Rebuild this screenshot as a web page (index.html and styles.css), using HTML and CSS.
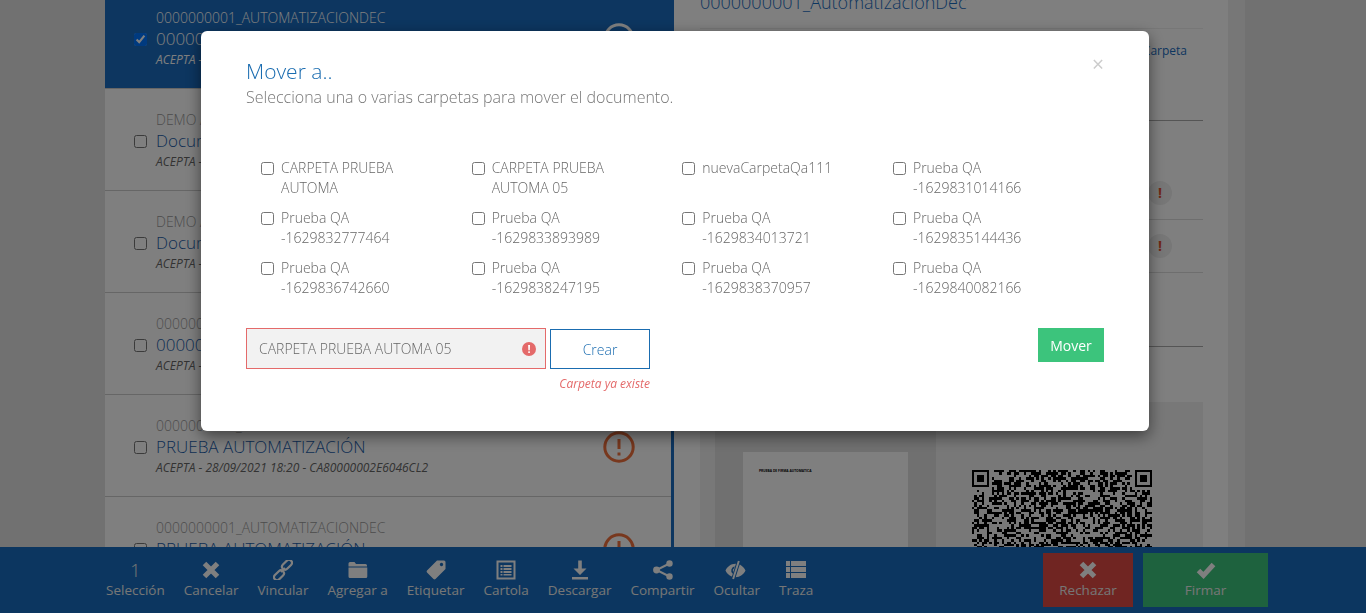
FILE: index.html
```html
<!DOCTYPE html>
<html lang="es">

<head>
  <meta charset="UTF-8">
  <meta name="viewport" content="width=device-width, initial-scale=1.0">
  <title>Mover a..</title>
  <link rel="stylesheet" href="styles.css">
</head>

<body>
  <div class="page">
    <div class="content">
      <section class="doc-list">
        <article class="doc-row selected">
          <input type="checkbox" class="row-check" checked>
          <div class="row-text">
            <p class="row-owner">0000000001_AUTOMATIZACIONDEC</p>
            <p class="row-title">0000000001_AutomatizaciónDec</p>
            <p class="row-meta">ACEPTA - 28/09/2021 18:20 - CA80000002E6046CL2</p>
          </div>
          <svg class="row-alert" viewBox="0 0 32 32"><circle cx="16" cy="16" r="14.2" /><path d="M16 8v10M16 21.5v3" /></svg>
        </article>
        <article class="doc-row">
          <input type="checkbox" class="row-check">
          <div class="row-text">
            <p class="row-owner">DEMO ACEPTA</p>
            <p class="row-title">Documento de prueba</p>
            <p class="row-meta">ACEPTA - 28/09/2021 18:20 - CA80000002E6046CL2</p>
          </div>
          <svg class="row-alert" viewBox="0 0 32 32"><circle cx="16" cy="16" r="14.2" /><path d="M16 8v10M16 21.5v3" /></svg>
        </article>
        <article class="doc-row">
          <input type="checkbox" class="row-check">
          <div class="row-text">
            <p class="row-owner">DEMO ACEPTA</p>
            <p class="row-title">Documento de prueba</p>
            <p class="row-meta">ACEPTA - 28/09/2021 18:20 - CA80000002E6046CL2</p>
          </div>
          <svg class="row-alert" viewBox="0 0 32 32"><circle cx="16" cy="16" r="14.2" /><path d="M16 8v10M16 21.5v3" /></svg>
        </article>
        <article class="doc-row">
          <input type="checkbox" class="row-check">
          <div class="row-text">
            <p class="row-owner">0000000001_AUTOMATIZACIONDEC</p>
            <p class="row-title">0000000001_AutomatizaciónDec</p>
            <p class="row-meta">ACEPTA - 28/09/2021 18:20 - CA80000002E6046CL2</p>
          </div>
          <svg class="row-alert" viewBox="0 0 32 32"><circle cx="16" cy="16" r="14.2" /><path d="M16 8v10M16 21.5v3" /></svg>
        </article>
        <article class="doc-row">
          <input type="checkbox" class="row-check">
          <div class="row-text">
            <p class="row-owner">0000000001_AUTOMATIZACIONDEC</p>
            <p class="row-title">PRUEBA AUTOMATIZACIÓN</p>
            <p class="row-meta">ACEPTA - 28/09/2021 18:20 - CA80000002E6046CL2</p>
          </div>
          <svg class="row-alert" viewBox="0 0 32 32"><circle cx="16" cy="16" r="14.2" /><path d="M16 8v10M16 21.5v3" /></svg>
        </article>
        <article class="doc-row">
          <input type="checkbox" class="row-check">
          <div class="row-text">
            <p class="row-owner">0000000001_AUTOMATIZACIONDEC</p>
            <p class="row-title">PRUEBA AUTOMATIZACIÓN</p>
            <p class="row-meta">ACEPTA - 28/09/2021 18:20 - CA80000002E6046CL2</p>
          </div>
          <svg class="row-alert" viewBox="0 0 32 32"><circle cx="16" cy="16" r="14.2" /><path d="M16 8v10M16 21.5v3" /></svg>
        </article>
      </section>

      <section class="doc-detail">
        <h2 class="detail-title">0000000001_AutomatizaciónDec</h2>
        <div class="detail-links"><a href="#">Agregar a Carpeta</a></div>
        <div class="detail-signers">
          <div class="signer"><span class="signer-badge">!</span></div>
          <div class="signer"><span class="signer-badge">!</span></div>
        </div>
        <div class="preview">
          <div class="preview-pages">
            <div class="preview-sheet"><span>PRUEBA DE FIRMA AUTOMATICA</span></div>
          </div>
          <svg id="qr" class="preview-qr" viewBox="0 0 73 73" shape-rendering="crispEdges"></svg>
        </div>
      </section>
      <div class="side-strip"></div>
    </div>

    <footer class="action-bar">
      <div class="action-item"><span class="action-count">1</span><span>Selección</span></div>
      <div class="action-item">
        <svg viewBox="0 0 20 20"><path class="icon-line" d="M3.500 3.500l13 13M16.500 3.500l-13 13" /></svg>
        <span>Cancelar</span>
      </div>
      <div class="action-item">
        <svg viewBox="0 0 20 20"><g class="icon-outline"><rect x="11" y="-1" width="6" height="11.500" rx="3" transform="rotate(45 14 4.750)" /><rect x="3" y="9.500" width="6" height="11.500" rx="3" transform="rotate(45 6 15.250)" /><path d="M8 12l4-4" /></g></svg>
        <span>Vincular</span>
      </div>
      <div class="action-item">
        <svg viewBox="0 0 20 20"><path d="M.5 3.500A1.500 1.500 0 0 1 2 2h4.500l1.500 2h9.500A1.500 1.500 0 0 1 19 5.500V6.500H.5zM.5 7.500h18.800v9A1.500 1.500 0 0 1 17.800 18H2a1.500 1.500 0 0 1-1.500-1.500z" /></svg>
        <span>Agregar a</span>
      </div>
      <div class="action-item">
        <svg viewBox="0 0 20 20"><path fill-rule="evenodd" d="M11 .5h7a1.500 1.500 0 0 1 1.500 1.500v7L9.500 19a1.500 1.500 0 0 1-2 0L1 12.500a1.500 1.500 0 0 1 0-2zM15.500 2.800a1.700 1.700 0 1 0 .01 0z" /></svg>
        <span>Etiquetar</span>
      </div>
      <div class="action-item">
        <svg viewBox="0 0 20 20"><path fill-rule="evenodd" d="M.5.5h19v19H.5zM2.500 2.500v15h15v-15zM4.500 5h2v2h-2zM7.500 5h8v2h-8zM4.500 8h2v2h-2zM7.500 8h8v2h-8zM4.500 11h2v2h-2zM7.500 11h8v2h-8zM4.500 14h2v1.500h-2zM7.500 14h8v1.500h-8z" /></svg>
        <span>Cartola</span>
      </div>
      <div class="action-item">
        <svg viewBox="0 0 20 20"><path d="M8.200 .5h3.600v8h4.700L10 15 3.500 8.500h4.700zM2 17h16v2.500H2z" /></svg>
        <span>Descargar</span>
      </div>
      <div class="action-item">
        <svg viewBox="0 0 20 20"><circle cx="16.500" cy="3.500" r="3.200" /><circle cx="3.500" cy="10" r="3.400" /><circle cx="16.500" cy="16.500" r="3.200" /><path class="icon-thin" d="M16.500 3.500L3.500 10l13 6.500" /></svg>
        <span>Compartir</span>
      </div>
      <div class="action-item">
        <svg class="icon-eye" viewBox="0 0 21 21"><path fill-rule="evenodd" d="M0 11c2-4 5.500-7 10.500-7s8.500 3 10.500 7c-2 4-5.500 7-10.500 7S2 15 0 11zM9.500 6.500a4.700 4.700 0 0 0-2 8l1-1.800a2.700 2.700 0 0 1 .7-4z" /><path class="icon-gap" d="M14 1L8 20" /><path class="icon-thin" d="M14 1L8 20" /></svg>
        <span>Ocultar</span>
      </div>
      <div class="action-item">
        <svg viewBox="0 0 20 20"><path d="M0 1h4v5H0zM5 1h15v5H5zM0 7h4v5H0zM5 7h15v5H5zM0 13h4v5H0zM5 13h15v5H5z" /></svg>
        <span>Traza</span>
      </div>
      <div class="action-buttons">
        <button type="button" class="big-btn reject">
          <svg viewBox="0 0 20 20"><path class="icon-line" d="M3.500 3.500l13 13M16.500 3.500l-13 13" /></svg>
          <span>Rechazar</span>
        </button>
        <button type="button" class="big-btn sign">
          <svg viewBox="0 0 20 20"><path class="icon-line" d="M2.500 10.500l5 5 10-11" /></svg>
          <span>Firmar</span>
        </button>
      </div>
    </footer>
  </div>

  <div class="backdrop"></div>

  <div class="modal">
    <span class="modal-close">×</span>
    <h3 class="modal-title">Mover a..</h3>
    <p class="modal-sub">Selecciona una o varias carpetas para mover el documento.</p>
    <div class="folder-grid">
      <label class="folder"><input type="checkbox"><span>CARPETA PRUEBA AUTOMA</span></label>
      <label class="folder"><input type="checkbox"><span>CARPETA PRUEBA AUTOMA 05</span></label>
      <label class="folder"><input type="checkbox"><span>nuevaCarpetaQa111</span></label>
      <label class="folder"><input type="checkbox"><span>Prueba QA -1629831014166</span></label>
      <label class="folder"><input type="checkbox"><span>Prueba QA -1629832777464</span></label>
      <label class="folder"><input type="checkbox"><span>Prueba QA -1629833893989</span></label>
      <label class="folder"><input type="checkbox"><span>Prueba QA -1629834013721</span></label>
      <label class="folder"><input type="checkbox"><span>Prueba QA -1629835144436</span></label>
      <label class="folder"><input type="checkbox"><span>Prueba QA -1629836742660</span></label>
      <label class="folder"><input type="checkbox"><span>Prueba QA -1629838247195</span></label>
      <label class="folder"><input type="checkbox"><span>Prueba QA -1629838370957</span></label>
      <label class="folder"><input type="checkbox"><span>Prueba QA -1629840082166</span></label>
    </div>
    <div class="modal-foot">
      <div class="new-folder">
        <div class="new-folder-row">
          <div class="folder-input">
            <span>CARPETA PRUEBA AUTOMA 05</span>
            <i class="input-error">!</i>
          </div>
          <button type="button" class="create-btn">Crear</button>
        </div>
        <p class="error-text">Carpeta ya existe</p>
      </div>
      <button type="button" class="move-btn">Mover</button>
    </div>
  </div>

  <script>
    // fake qr, just has to look like one
    const qr = document.getElementById('qr')
    let seed = 20210928
    let cells = ''

    function nextBit() {
      seed = (seed * 1103515245 + 12345) % 2147483648
      return (seed >> 16) % 2
    }

    function inFinder(x, y) {
      return (x < 8 && y < 8) || (x > 64 && y < 8) || (x < 8 && y > 64)
    }

    for (let y = 0; y < 73; y++) {
      for (let x = 0; x < 73; x++) {
        if (!inFinder(x, y) && nextBit()) {
          cells += `<rect x="${x}" y="${y}" width="1" height="1"/>`
        }
      }
    }

    [[0, 0], [66, 0], [0, 66]].forEach(([x, y]) => {
      cells += `<path fill-rule="evenodd" d="M${x} ${y}h7v7h-7zM${x + 1} ${y + 1}v5h5v-5z"/><rect x="${x + 2}" y="${y + 2}" width="3" height="3"/>`
    })

    qr.innerHTML = cells
  </script>
</body>

</html>
```

FILE: styles.css
```css
/* everything under .backdrop is dimmed to half, so colours here are the undimmed ones */
* {
  box-sizing: border-box;
}

html,
body {
  margin: 0;
  height: 100%;
  overflow: hidden;
}

body {
  font-family: "Open Sans", sans-serif;
  font-size: 14px;
  color: #777;
}

p,
h2,
h3 {
  margin: 0;
  font-weight: 400;
}

.page {
  height: 613px;
  display: flex;
  flex-direction: column;
  background-color: #e2e2e2;
}

.content {
  flex: 0 0 547px;
  display: flex;
  overflow: hidden;
  padding-left: 105px;
}

.doc-list {
  flex: 0 0 569px;
  margin-top: -13px;
  background-color: #fff;
  border-right: 3px solid #1a6cc0;
}

.doc-row {
  height: 102px;
  display: flex;
  align-items: flex-start;
  padding: 21px 36px 0 29px;
  border-bottom: 1px solid #ccc;
}

.row-check {
  margin: 25px 9px 0 0;
  width: 13px;
  height: 13px;
  flex: none;
}

.row-text {
  flex-grow: 1;
}

.row-owner {
  font-weight: 300;
  line-height: 20px;
  color: #999;
  white-space: nowrap;
}

.row-title {
  font-size: 17px;
  font-weight: 300;
  line-height: 22px;
  color: #1a5ca8;
  white-space: nowrap;
}

.row-meta {
  font-size: 12px;
  font-style: italic;
  line-height: 19px;
  color: #666;
  white-space: nowrap;
}

.row-alert {
  width: 32px;
  height: 32px;
  margin-top: 15px;
  flex: none;
  fill: none;
  stroke: #f0703c;
  stroke-width: 3;
}

.selected {
  background-color: #1a6cc0;
  border-bottom-color: #ccc;
}

.selected .row-owner,
.selected .row-title,
.selected .row-meta {
  color: #fff;
}

.selected .row-alert {
  stroke: #fff;
}

.doc-detail {
  flex: 0 0 554px;
  background-color: #fff;
  padding: 0 25px 0 26px;
}

.side-strip {
  flex: 0 0 17px;
  background-color: #eee;
}

.detail-title {
  height: 39px;
  margin-top: -10px;
  font-size: 18px;
  font-weight: 300;
  color: #1a6cc0;
  line-height: 25px;
  border-bottom: 1px solid #eee;
}

.detail-links {
  height: 92px;
  padding: 13px 16px 0 0;
  text-align: right;
  font-size: 12px;
  border-bottom: 1px solid #aaa;
}

.detail-links a {
  color: #1a6cc0;
  text-decoration: none;
}

.detail-signers {
  height: 226px;
  padding-top: 46px;
  border-bottom: 1px solid #aaa;
}

.signer {
  height: 53px;
  display: flex;
  justify-content: flex-end;
  align-items: center;
  padding-right: 31px;
  border-bottom: 1px solid #ddd;
}

.signer-badge {
  width: 24px;
  height: 24px;
  border-radius: 50%;
  background-color: #eee;
  color: #e0502a;
  font-weight: 700;
  font-size: 14px;
  line-height: 24px;
  text-align: center;
}

.preview {
  height: 146px;
  margin-top: 55px;
  padding-left: 15px;
  display: flex;
  background-color: #f0f0f0;
}

.preview-pages {
  width: 221px;
  height: 100%;
  padding: 50px 28px 0;
  background-color: #e0e0e0;
}

.preview-sheet {
  height: 100%;
  padding: 16px;
  background-color: #fff;
  font-size: 3.300px;
  font-weight: 700;
  color: #000;
  line-height: 6px;
}

.preview-qr {
  width: 180px;
  height: 180px;
  margin: 68px 0 0 36px;
  flex: none;
}

.action-bar {
  flex: 0 0 66px;
  display: flex;
  align-items: flex-start;
  gap: 19px;
  padding: 6px 98px 0 106px;
  background-color: #186cc0;
  font-size: 13.500px;
}

.action-item {
  display: flex;
  flex-direction: column;
  align-items: center;
  line-height: 20px;
  color: #ececec;
}

.action-item svg,
.big-btn svg {
  width: 20px;
  height: 20px;
  margin-top: 7px;
  flex: none;
  fill: #fff;
}

.action-item .icon-eye {
  width: 21px;
  margin-left: -2px;
}

.action-count {
  font-size: 18px;
  font-weight: 300;
  line-height: 34px;
  height: 27px;
}

.icon-line {
  fill: none;
  stroke: #fff;
  stroke-width: 5;
}

.icon-outline {
  fill: none;
  stroke: #fff;
  stroke-width: 2.200;
}

.icon-thin {
  fill: none;
  stroke: #fff;
  stroke-width: 2;
}

.icon-gap {
  fill: none;
  stroke: #186cc0;
  stroke-width: 4;
}

.action-buttons {
  margin-left: auto;
  display: flex;
  gap: 10px;
}

.big-btn {
  height: 54px;
  padding: 0;
  border: 0;
  display: flex;
  flex-direction: column;
  align-items: center;
  font: inherit;
  line-height: 20px;
  color: #ececec;
}

.reject {
  width: 90px;
  background-color: #e04a44;
}

.sign {
  width: 125px;
  background-color: #3cc47c;
}

.backdrop {
  position: fixed;
  inset: 0;
  background-color: rgba(0, 0, 0, .5);
}

.modal {
  position: fixed;
  left: 201px;
  top: 31px;
  width: 948px;
  height: 400px;
  padding: 28px 45px 0;
  background-color: #fff;
  border-radius: 6px;
  box-shadow: 0 5px 15px rgba(0, 0, 0, .5);
}

.modal-close {
  position: absolute;
  top: 20px;
  right: 45px;
  font-size: 21px;
  font-weight: 400;
  line-height: 26px;
  color: #ccc;
}

.modal-title {
  font-size: 21px;
  font-weight: 300;
  line-height: 25px;
  color: #1a6cb0;
}

.modal-sub {
  font-size: 16px;
  font-weight: 300;
  line-height: 26px;
  color: #777;
}

.folder-grid {
  display: grid;
  grid-template-columns: repeat(4, 210.670px);
  grid-auto-rows: 50px;
  margin: 48px 0 0 15px;
}

.folder {
  display: flex;
  align-items: flex-start;
  width: 190px;
  font-weight: 300;
  line-height: 20px;
  color: #666;
}

.folder input {
  width: 13px;
  height: 13px;
  margin: 4px 7px 0 0;
  flex: none;
}

.modal-foot {
  display: flex;
  justify-content: space-between;
  align-items: flex-start;
  margin-top: 20px;
}

.new-folder {
  width: 404px;
}

.new-folder-row {
  display: flex;
  gap: 4px;
  align-items: flex-start;
}

.folder-input {
  width: 300px;
  height: 41px;
  display: flex;
  justify-content: space-between;
  align-items: center;
  padding: 0 9px 0 12px;
  background-color: #f2f2f2;
  border: 1px solid #e46a6a;
  font-weight: 300;
  color: #666;
}

.input-error {
  width: 14px;
  height: 14px;
  border-radius: 50%;
  background-color: #e46a6a;
  color: #fff;
  font-size: 11px;
  font-style: normal;
  font-weight: 700;
  line-height: 14px;
  text-align: center;
}

.create-btn {
  width: 100px;
  height: 40px;
  margin-top: 1px;
  background-color: #fff;
  border: 1px solid #1a6cb0;
  font: inherit;
  font-weight: 300;
  color: #1a6cb0;
}

.error-text {
  margin-top: 6px;
  text-align: right;
  font-size: 12px;
  font-style: italic;
  color: #e46a6a;
}

.move-btn {
  width: 66px;
  height: 34px;
  background-color: #3cc47c;
  border: 0;
  font: inherit;
  color: #fff;
}
```
